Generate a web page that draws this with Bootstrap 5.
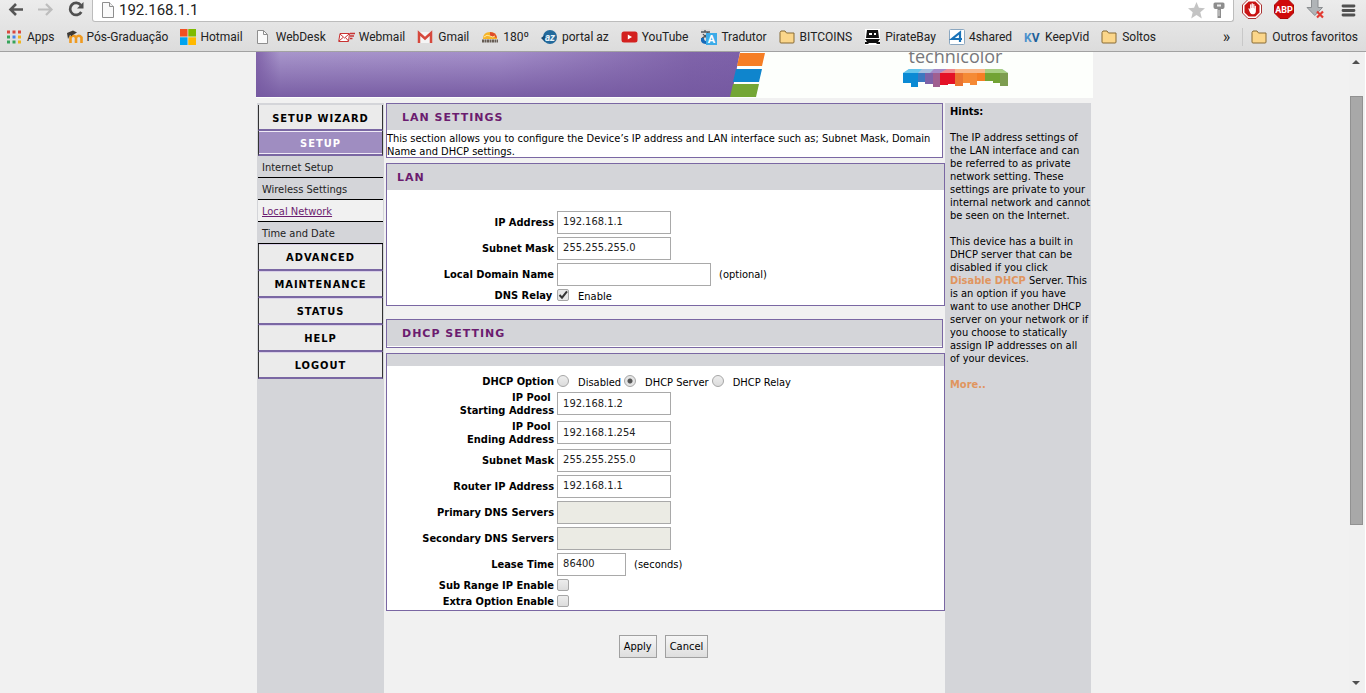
<!DOCTYPE html>
<html lang="en">
<head>
<meta charset="utf-8">
<meta name="viewport" content="width=device-width, initial-scale=1">
<title>192.168.1.1</title>
<link href="https://cdn.jsdelivr.net/npm/bootstrap@5.3.0/dist/css/bootstrap.min.css" rel="stylesheet">
<style>
:root { --panel: #d4d5d9; --purple: #7a67a3; --plum: #6b1c6f; --hint: #e0955f; }
body { background: #f1f1f1; color: #000; font: 11px/13px "DejaVu Sans Condensed", "DejaVu Sans", sans-serif; }
svg { display: block; flex: none; }

/* browser chrome */
.chrome { background: linear-gradient(#ececec, #dcdcdc); border-bottom: 1px solid #a2a2a2; font-family: Roboto, "Open Sans", sans-serif; font-size: 12px; line-height: 16px; }
.tool-row { height: 22px; }
.tool-nav { gap: 14px; }
.tool-ext { gap: 12px; }
.tool-btn { border: 0; background: none; padding: 0; }
.omnibox { height: 23px; margin-top: -1px; background: #fff; border: 1px solid #bcbcbc; border-top: 0; border-radius: 0 0 3px 3px; }
.omnibox input { border: 0; outline: 0; background: transparent; font-size: 15px; line-height: 20px; color: #222; padding: 0; min-width: 0; }
.bookmarks { height: 29px; gap: 12px; padding: 0 8px 0 7px; }
.bookmarks a { color: #222; text-decoration: none; white-space: nowrap; }
.divider { width: 1px; height: 18px; background: #c8c8c8; }

/* viewport scrollbar */
.scroll-track { width: 17px; background: #f0f0f0; border-right: 1px solid #fff; padding-right: 2px; }
.scroll-thumb { width: 13px; flex: 0 1 429px; background: #a8a8a8; border: 1px solid #919191; margin-top: 24px; }

/* router page */
.page { width: 100%; max-width: 837px; }
.page-body { margin: 5px 2px 0 1px; }
.banner { background: #fdfffc; height: 46px; }
.brand { padding-right: 85px; }
.brand-word { font: 18px/18px "Open Sans", sans-serif; color: #77787b; margin-top: -5px; }
.side { width: 127px; background: var(--panel); padding: 2px 1px 0; }
.side-btn { display: block; height: 27px; border: 1px solid #333; border-width: 0 1px 2px; border-bottom-color: var(--purple); box-shadow: inset 0 1px #d9cfe8; background: #ebebeb; color: #000; font-weight: 700; line-height: 28px; letter-spacing: 1px; text-align: center; text-decoration: none; }
.side-btn.first { height: 26px; box-shadow: none; line-height: 27px; }
.side-btn.current { height: 25px; background: #9f8dc1; color: #fff; line-height: 25px; box-shadow: inset 0 1px #efeaf6, inset 0 -1px #efeaf6; }
.side-link { display: block; height: 22px; border-bottom: 1px solid #000; color: #222; line-height: 24px; padding-left: 4px; text-decoration: none; }
.side-link.current { background: #f1f1f1; color: var(--plum); text-decoration: underline; }
.main-col { padding-left: 2px; min-width: 0; }
.main-col .inset { margin-right: 2px; }
.panel-box { border: 1px solid var(--purple); background: #fff; }
.panel-box h2 { height: 26px; background: var(--panel); color: var(--plum); font: 700 11px/27px "DejaVu Sans", sans-serif; letter-spacing: 1px; margin: 0; padding-left: 15px; }
.panel-box h2.lan-title { padding-left: 10px; }
.intro { height: 27px; padding-top: 2px; }
.lan { margin-top: 5px; }
.lan-fields { padding: 19px 0 2px; }
.dhcp-title { margin-top: 13px; padding-bottom: 1px; }
.dhcp { margin-top: 5px; padding-bottom: 1px; }
.strip { height: 12px; background: var(--panel); margin-bottom: 7px; }
.field-row { display: grid; grid-template-columns: 30% 1fr; column-gap: 3px; align-items: center; min-height: 26px; }
.field-row.tight { min-height: 16px; }
.field-row.tall { min-height: 29px; }
.field-row > :first-child { font-weight: 700; text-align: right; }
.field-row input[type=text] { height: 23px; width: 114px; border: 1px solid #a9a9a9; background: #fff; padding: 0 5px 1px; color: #222; line-height: 13px; }
.field-row input[type=text]:disabled { background: #ebebe4; }
.field-row input.wide { width: 154px; }
.field-row input.short { width: 69px; }
.field-row input[type=checkbox], .field-row input[type=radio] { appearance: none; width: 12px; height: 12px; margin: 0; border: 1px solid #a6a6a6; border-radius: 2px; background: linear-gradient(#ededed, #dcdcdc); }
.field-row input[type=radio] { border-radius: 50%; }
.field-row input[type=radio]:checked { background: radial-gradient(circle, #555 0 2px, #e4e4e4 3px); }
.field-row input[type=checkbox]:checked { background: url("data:image/svg+xml,%3Csvg xmlns='http://www.w3.org/2000/svg' viewBox='0 0 10 10'%3E%3Cpath d='M1.5 5l2.500 2.700L9 1.300' fill='none' stroke='%23333' stroke-width='2'/%3E%3C/svg%3E") center/10px no-repeat #e6e6e6; }
.relay-label { padding-right: 2px; }
.radio-label { margin: 2px 3px 0 9px; }
.push-btn { height: 23px; border: 1px solid #a0a0a0; border-radius: 0; background: linear-gradient(#f6f6f6, #dedede); color: #000; padding: 0 4px; }
.hints { width: 146px; background: var(--panel); padding: 2px 0 0 5px; }
.hints p { margin: 0 0 13px; }
.hints a { color: var(--hint); font-weight: 700; text-decoration: none; }
</style>
</head>
<body class="vh-100 d-flex flex-column overflow-hidden">

<header class="chrome flex-shrink-0">
  <div class="tool-row d-flex align-items-start">
    <div class="tool-nav d-flex px-2">
      <button class="tool-btn" aria-label="Back"><svg width="16" height="18" viewBox="0 0 16 18"><path d="M15 9.500H3M8 4L2.500 9.500 8 15" fill="none" stroke="#555" stroke-width="2.600"/></svg></button>
      <button class="tool-btn" aria-label="Forward"><svg width="16" height="18" viewBox="0 0 16 18"><path d="M0 9.500h13M8 4l5.500 5.500L8 15" fill="none" stroke="#bdbdbd" stroke-width="2.200"/></svg></button>
      <button class="tool-btn" aria-label="Reload"><svg width="16" height="18" viewBox="0 0 16 18"><path d="M12.800 5.200A6 6 0 1 0 13.300 12" fill="none" stroke="#505050" stroke-width="2.700"/><path d="M15.500 2v6.500H9z" fill="#505050"/></svg></button>
    </div>
    <div class="omnibox flex-grow-1 d-flex align-items-center ps-1 pe-2">
      <svg class="ms-1" width="14" height="16" viewBox="0 0 14 16"><path d="M1.500.500h7l4 4v11h-11z" fill="#fafafa" stroke="#8e8e8e"/><path d="M8.500.500v4h4" fill="#eee" stroke="#8e8e8e"/></svg>
      <input class="flex-grow-1 ms-1" type="text" value="192.168.1.1" aria-label="Address">
      <svg width="17" height="17" viewBox="0 0 17 17"><path d="M8.500 0l2.400 5.800 6.100.4-4.700 4 1.500 6.300-5.300-3.400-5.300 3.400 1.500-6.300L0 6.200l6.100-.4z" fill="#c4c4c4"/></svg>
      <svg class="ms-2" width="12" height="18" viewBox="0 0 12 18"><path d="M2 1.500h8q1.500 0 1.500 1.500v3q0 1.500-1.500 2H8v9H4.500V8H2Q.500 7.500.500 6V3Q.500 1.500 2 1.500z" fill="#8d8d8d"/><path d="M4 3.500h4v2H4z" fill="#eee"/><path d="M6 9v6" stroke="#ddd"/></svg>
    </div>
    <div class="tool-ext d-flex px-2">
      <svg width="20" height="20" viewBox="0 0 20 20"><path d="M6-.500h8l5.500 5.500v8L14 18.500H6L.500 13V5z" fill="#fff" stroke="#a33"/><path d="M6.600 1.500h6.800l4.100 4.100v6.800l-4.100 4.100H6.600l-4.100-4.100V5.600z" fill="#c91414"/><path d="M6.300 8.500l1-.3.800 1.400V4.500q.6-.7 1.200 0V8h.3V3.500q.7-.7 1.300 0V8h.3V4.300q.7-.6 1.200 0V8.500h.3V6q.7-.5 1.200 0v5q0 3-2.700 3.300-2.200.2-3.100-1.500z" fill="#fff"/></svg>
      <svg width="20" height="20" viewBox="0 0 20 20"><path d="M6-.500h8l5.500 5.500v8L14 18.500H6L.500 13V5z" fill="#d00a0a" stroke="#a80808"/><text x="10" y="13" text-anchor="middle" font-family="Roboto" font-size="9" font-weight="700" fill="#fff">ABP</text></svg>
      <svg width="20" height="20" viewBox="0 0 20 20"><path d="M5.500-1h6.500v8.500h4.500L8.800 15.500 1 7.500h4.500z" fill="#b0b4b7" stroke="#8a8d90"/><path d="M11 11.500l6 6M17 11.500l-6 6" stroke="#e23b32" stroke-width="2.200"/></svg>
      <button class="tool-btn" aria-label="Menu"><svg width="20" height="18" viewBox="0 0 20 18"><path d="M5 5h11M5 9.500h11M5 14h11" stroke="#505050" stroke-width="2.800" stroke-linecap="round"/></svg></button>
    </div>
  </div>
  <nav class="bookmarks d-flex align-items-center" aria-label="Bookmarks">
    <a href="#" class="d-flex gap-1"><svg width="16" height="16" viewBox="0 0 16 16"><path d="M0 3h14" stroke="#d9473d" stroke-width="3" stroke-dasharray="3 2.500"/><path d="M0 8h4" stroke="#36a35a" stroke-width="3" stroke-dasharray="3 9"/><path d="M5.500 8H9" stroke="#4583ea" stroke-width="3" stroke-dasharray="3 9"/><path d="M11 8h3" stroke="#f0b51f" stroke-width="3"/><path d="M0 13h9" stroke="#36a35a" stroke-width="3" stroke-dasharray="3 2.500"/><path d="M11 13h3" stroke="#f0b51f" stroke-width="3"/></svg>Apps</a>
    <a href="#" class="d-flex gap-1"><svg width="16" height="16" viewBox="0 0 16 16"><path d="M3.500 14V7M3.500 8.500q3-3.500 5.500 0v5.500M9 8.500q3-3.500 5.500 0v5.500" fill="none" stroke="#ef9a20" stroke-width="2.600"/><path d="M0 4l6-2.500 4 2L5 6.500v1L3 6 1 10z" fill="#3d3a36"/></svg>Pós-Graduação</a>
    <a href="#" class="d-flex gap-1"><svg width="16" height="16" viewBox="0 0 16 16"><path d="M0 0h7.500v7.500H0z" fill="#f25022"/><path d="M8.300 0H16v7.500H8.300z" fill="#7fba00"/><path d="M0 8.300h7.500V16H0z" fill="#00a4ef"/><path d="M8.300 8.300H16V16H8.300z" fill="#ffb900"/></svg>Hotmail</a>
    <a href="#" class="d-flex gap-1"><svg width="17" height="16" viewBox="0 0 17 16"><path d="M2.500 1.500h6l4 4v9h-10z" fill="#fafafa" stroke="#8e8e8e"/><path d="M8.500 1.500v4h4" fill="none" stroke="#8e8e8e"/></svg>WebDesk</a>
    <a href="#" class="d-flex gap-1"><svg width="17" height="16" viewBox="0 0 17 16"><path d="M2 4.500h9.500l-1 8H.700z" fill="#fff" stroke="#c83232"/><path d="M2 5l4.500 4L11 5M1 12l4-3.500M10.500 12L7.500 8.500" fill="none" stroke="#c83232"/><path d="M12 4.500h5M12 7h4M12 9.500h2.500" stroke="#c83232" stroke-width="1.500"/></svg>Webmail</a>
    <a href="#" class="d-flex gap-1"><svg width="17" height="16" viewBox="0 0 17 16"><path d="M1 3h14v11H1z" fill="#f5f5f5"/><path d="M2 14V4l6 5.500L14 4v10" fill="none" stroke="#d6483c" stroke-width="2.500"/></svg>Gmail</a>
    <a href="#" class="d-flex gap-1"><svg width="18" height="16" viewBox="0 0 18 16"><path d="M2 10Q2 3 9 3t7 7z" fill="#f6b429"/><path d="M9 3q6 0 7 6L9 7z" fill="#df4b2b"/><path d="M3 8q3-3 6-1t5 0" stroke="#ffe9a0" fill="none"/><path d="M1 12h16" stroke="#665d55" stroke-width="3" stroke-dasharray="2 .5"/></svg>180º</a>
    <a href="#" class="d-flex gap-1"><svg width="17" height="16" viewBox="0 0 17 16"><circle cx="9" cy="8" r="7" fill="#236a9c"/><path d="M0 9l4-3v7z" fill="#174c75"/><text x="9" y="11.500" text-anchor="middle" font-family="Roboto" font-style="italic" font-weight="700" font-size="10" fill="#e8f3fa">az</text></svg>portal az</a>
    <a href="#" class="d-flex gap-1"><svg width="17" height="16" viewBox="0 0 17 16"><rect x=".500" y="2.500" width="16" height="11" rx="2.500" fill="#d3201f"/><path d="M6.800 5.500v5L11 8z" fill="#fff"/></svg>YouTube</a>
    <a href="#" class="d-flex gap-1"><svg width="17" height="16" viewBox="0 0 17 16"><path d="M1 0h9v9H1z" fill="#ddd"/><path d="M1 3h9M5 1v2M8 3q-1 4-6 6M3 5q2 3 5 4" stroke="#4e565c" fill="none" stroke-width="1.300"/><path d="M6 4h11v12H6z" fill="#3cabe8"/><path d="M1 9v3q1 3 5 3v-3q-2 0-2-3z" fill="#1669b8"/><text x="11.500" y="14" text-anchor="middle" font-family="Roboto" font-weight="700" font-size="11" fill="#fff">A</text></svg>Tradutor</a>
    <a href="#" class="d-flex gap-1"><svg width="17" height="16" viewBox="0 0 17 16"><path d="M1 13V3.500L2 2h4l1.500 2h7.500V13q0 1-1 1H2q-1 0-1-1z" fill="#fbd68a" stroke="#876a35"/></svg>BITCOINS</a>
    <a href="#" class="d-flex gap-1"><svg width="17" height="16" viewBox="0 0 17 16"><path d="M1 0h15v16H1z" fill="#fff"/><path d="M3 1h11l1 8H2z" fill="#111"/><path d="M5 4h3v2H5zM10 4h2v2h-2z" fill="#fff"/><path d="M1 10h15l-2 3h2v2h-3l-1-1H5l-1 1H1v-2h2z" fill="#111"/></svg>PirateBay</a>
    <a href="#" class="d-flex gap-1"><svg width="17" height="16" viewBox="0 0 17 16"><rect x="1.500" y=".500" width="15" height="15" rx="1" fill="#fff" stroke="#8ba7c0"/><path d="M12 13V3.500L4 10h10" fill="none" stroke="#1972b8" stroke-width="2.200"/></svg>4shared</a>
    <a href="#" class="d-flex gap-1"><svg width="17" height="16" viewBox="0 0 17 16"><text x="0" y="12.500" font-family="Roboto" font-weight="700" font-size="12" fill="#4a90cc">K<tspan fill="#1f5f99">V</tspan></text></svg>KeepVid</a>
    <a href="#" class="d-flex gap-1"><svg width="17" height="16" viewBox="0 0 17 16"><path d="M1 13V3.500L2 2h4l1.500 2h7.500V13q0 1-1 1H2q-1 0-1-1z" fill="#fbd68a" stroke="#876a35"/></svg>Soltos</a>
    <a href="#" class="ms-auto fs-6" aria-label="More bookmarks">»</a>
    <span class="d-flex align-items-center gap-2"><span class="divider"></span>
    <a href="#" class="d-flex gap-1"><svg width="17" height="16" viewBox="0 0 17 16"><path d="M1 13V3.500L2 2h4l1.500 2h7.500V13q0 1-1 1H2q-1 0-1-1z" fill="#fbd68a" stroke="#876a35"/></svg>Outros favoritos</a></span>
  </nav>
</header>

<div class="flex-grow-1 d-flex overflow-hidden">
  <div class="flex-grow-1 d-flex justify-content-center overflow-hidden">
    <div class="page d-flex flex-column">
      <div class="banner d-flex justify-content-between overflow-hidden flex-shrink-0">
        <svg width="510" height="46" viewBox="0 0 510 46">
          <defs>
            <linearGradient id="shade" x1="0" y1="0" x2="0" y2="1"><stop offset="0" stop-color="#7458a0" stop-opacity="0"/><stop offset="1" stop-color="#7458a0" stop-opacity=".9"/></linearGradient>
            <linearGradient id="wash"><stop offset="0" stop-color="#8265aa"/><stop offset=".05" stop-color="#a896cb"/><stop offset=".5" stop-color="#a48fc9"/><stop offset=".9" stop-color="#8064aa"/><stop offset="1" stop-color="#7d61a9"/></linearGradient>
          </defs>
          <path d="M0 0h484l-9 45H0z" fill="url(#wash)"/>
          <path d="M0 0h484l-9 45H0z" fill="url(#shade)"/>
          <path d="M484 1h25l-3 13h-25z" fill="#f57e25"/>
          <path d="M480 17h26l-3 13h-26z" fill="#0f85cd"/>
          <path d="M477 32h26l-3 13h-26z" fill="#74a635"/>
        </svg>
        <div class="brand d-flex flex-column align-items-center">
          <div class="brand-word">technicolor</div>
          <svg class="mt-1" width="105" height="19" viewBox="0 0 105 19">
            <path d="M0 4l6-4h93l6 4z" fill="#a7bfe0"/><path d="M0 4l6-4h13l-4 4z" fill="#64c5ec"/><path d="M27 4l4-4h14l-8 4z" fill="#a58bc8"/><path d="M37 4l7-4h8v4z" fill="#ef8a90"/><path d="M52 4V0h30v4z" fill="#f9b98c"/><path d="M82 4V0h17l6 4z" fill="#a8cf83"/>
            <path d="M0 4h15v14H8v-4H0z" fill="#0a8ad4"/><path d="M15 4h7v9h-7z" fill="#3c78c0"/><path d="M22 4h8v11h-8z" fill="#7d62a8"/><path d="M30 4h7v14h-7z" fill="#a05f90"/><path d="M37 4h15v11h-7v1h-8z" fill="#e41226"/><path d="M52 4h8v13h-8z" fill="#ea7430"/><path d="M60 4h14v12h-7v-2h-7z" fill="#f58a35"/><path d="M74 4h8v8h-8z" fill="#f57e25"/><path d="M82 4h15v10h-7v-2h-8z" fill="#72a334"/><path d="M97 4h8v13h-8z" fill="#7d9d50"/>
          </svg>
        </div>
      </div>

      <div class="page-body flex-grow-1 d-flex">
        <nav class="side flex-shrink-0" aria-label="Router menu">
          <a class="side-btn first" href="#">SETUP WIZARD</a>
          <a class="side-btn current" href="#">SETUP</a>
          <a class="side-link" href="#">Internet Setup</a>
          <a class="side-link" href="#">Wireless Settings</a>
          <a class="side-link current" href="#">Local Network</a>
          <a class="side-link" href="#">Time and Date</a>
          <a class="side-btn" href="#">ADVANCED</a>
          <a class="side-btn" href="#">MAINTENANCE</a>
          <a class="side-btn" href="#">STATUS</a>
          <a class="side-btn" href="#">HELP</a>
          <a class="side-btn" href="#">LOGOUT</a>
        </nav>

        <main class="main-col flex-grow-1">
          <form onsubmit="return false">
            <section class="panel-box inset">
              <h2>LAN SETTINGS</h2>
              <div class="intro">This section allows you to configure the Device’s IP address and LAN interface such as; Subnet Mask, Domain Name and DHCP settings.</div>
            </section>

            <section class="panel-box lan">
              <h2 class="lan-title">LAN</h2>
              <div class="lan-fields">
                <div class="field-row"><label for="ip">IP Address</label><div><input id="ip" type="text" value="192.168.1.1"></div></div>
                <div class="field-row"><label for="mask">Subnet Mask</label><div><input id="mask" type="text" value="255.255.255.0"></div></div>
                <div class="field-row"><label for="domain">Local Domain Name</label><div class="d-flex align-items-center gap-2"><input id="domain" class="wide" type="text"><span>(optional)</span></div></div>
                <div class="field-row tight"><span class="relay-label">DNS Relay</span><div class="d-flex align-items-center"><input id="relay" type="checkbox" checked><label class="radio-label" for="relay">Enable</label></div></div>
              </div>
            </section>

            <section class="panel-box inset dhcp-title"><h2>DHCP SETTING</h2></section>

            <section class="panel-box dhcp">
              <div class="strip"></div>
              <div class="field-row tight"><span>DHCP Option</span><div class="d-flex align-items-center">
                <input id="off" name="dhcp" type="radio"><label class="radio-label" for="off">Disabled</label>
                <input id="server" name="dhcp" type="radio" checked><label class="radio-label" for="server">DHCP Server</label>
                <input id="dhcprelay" name="dhcp" type="radio"><label class="radio-label" for="dhcprelay">DHCP Relay</label></div></div>
              <div class="field-row tall"><label for="start">IP Pool&nbsp;<br>Starting Address</label><div><input id="start" type="text" value="192.168.1.2"></div></div>
              <div class="field-row tall"><label for="end">IP Pool&nbsp;<br>Ending Address</label><div><input id="end" type="text" value="192.168.1.254"></div></div>
              <div class="field-row"><label for="mask2">Subnet Mask</label><div><input id="mask2" type="text" value="255.255.255.0"></div></div>
              <div class="field-row"><label for="router">Router IP Address</label><div><input id="router" type="text" value="192.168.1.1"></div></div>
              <div class="field-row"><label for="dns1">Primary DNS Servers</label><div><input id="dns1" type="text" disabled></div></div>
              <div class="field-row"><label for="dns2">Secondary DNS Servers</label><div><input id="dns2" type="text" disabled></div></div>
              <div class="field-row"><label for="lease">Lease Time</label><div class="d-flex align-items-center gap-2"><input id="lease" class="short" type="text" value="86400"><span>(seconds)</span></div></div>
              <div class="field-row tight"><label for="sub">Sub Range IP Enable</label><div class="d-flex"><input id="sub" type="checkbox"></div></div>
              <div class="field-row tight"><label for="extra">Extra Option Enable</label><div class="d-flex"><input id="extra" type="checkbox"></div></div>
            </section>

            <div class="d-flex justify-content-center gap-2 mt-4 pe-1">
              <button class="push-btn" type="submit">Apply</button>
              <button class="push-btn" type="button">Cancel</button>
            </div>
          </form>
        </main>

        <aside class="hints flex-shrink-0">
          <p class="fw-bold">Hints:</p>
          <p>The IP address settings of the LAN interface and can be referred to as private network setting. These settings are private to your internal network and cannot be seen on the Internet.</p>
          <p>This device has a built in DHCP server that can be disabled if you click <a href="#">Disable DHCP</a> Server. This is an option if you have want to use another DHCP server on your network or if you choose to statically assign IP addresses on all of&nbsp;your devices.</p>
          <a href="#">More..</a>
        </aside>
      </div>
    </div>
  </div>
  <div class="scroll-track d-flex flex-column align-items-center flex-shrink-0" aria-hidden="true">
    <svg class="my-2" width="8" height="4" viewBox="0 0 8 4"><path d="M0 4l4-4 4 4z" fill="#505050"/></svg>
    <div class="scroll-thumb"></div>
    <svg class="mt-auto mb-2" width="8" height="4" viewBox="0 0 8 4"><path d="M0 0l4 4 4-4z" fill="#505050"/></svg>
  </div>
</div>

<script src="https://cdn.jsdelivr.net/npm/bootstrap@5.3.0/dist/js/bootstrap.bundle.min.js"></script>
</body>
</html>
